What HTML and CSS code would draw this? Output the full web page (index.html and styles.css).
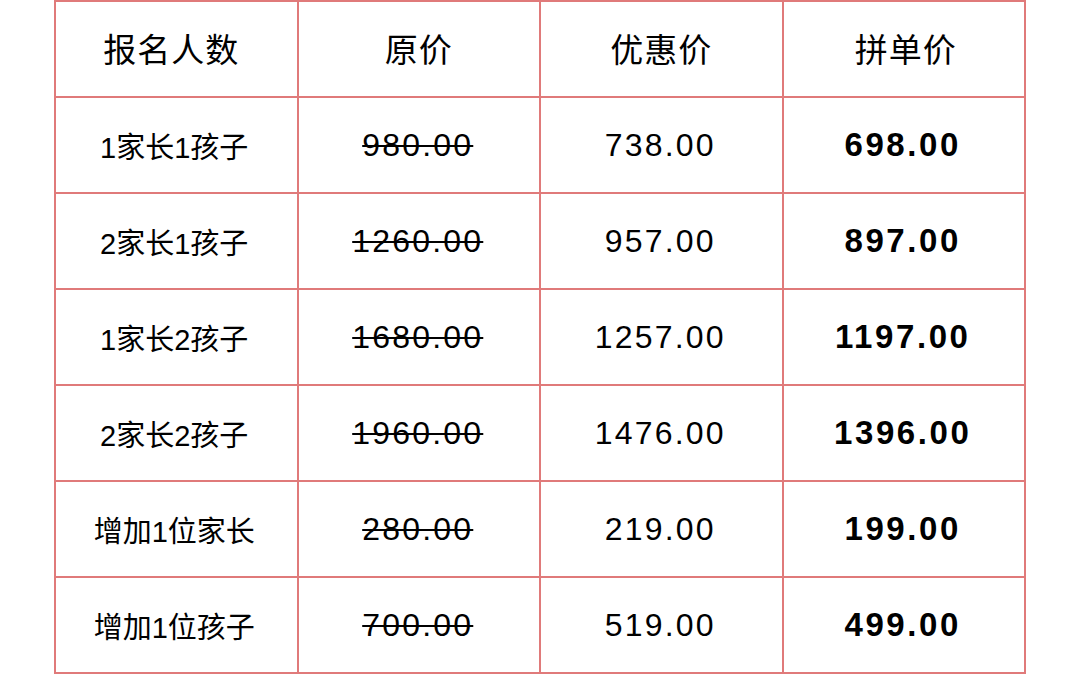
FILE: index.html
```html
<!DOCTYPE html>
<html lang="zh-CN">
<head>
<meta charset="utf-8">
<link rel="stylesheet" href="styles.css">
</head>
<body>
<div class="page">
  <div class="price-table">
    <div class="cell head first">报名人数</div>
    <div class="cell head">原价</div>
    <div class="cell head">优惠价</div>
    <div class="cell head shift">拼单价</div>

    <div class="cell label">1家长1孩子</div>
    <div class="cell num old">980.00</div>
    <div class="cell num">738.00</div>
    <div class="cell num bold">698.00</div>

    <div class="cell label">2家长1孩子</div>
    <div class="cell num old">1260.00</div>
    <div class="cell num">957.00</div>
    <div class="cell num bold">897.00</div>

    <div class="cell label">1家长2孩子</div>
    <div class="cell num old">1680.00</div>
    <div class="cell num">1257.00</div>
    <div class="cell num bold">1197.00</div>

    <div class="cell label">2家长2孩子</div>
    <div class="cell num old">1960.00</div>
    <div class="cell num">1476.00</div>
    <div class="cell num bold">1396.00</div>

    <div class="cell label">增加1位家长</div>
    <div class="cell num old">280.00</div>
    <div class="cell num">219.00</div>
    <div class="cell num bold">199.00</div>

    <div class="cell label">增加1位孩子</div>
    <div class="cell num old">700.00</div>
    <div class="cell num">519.00</div>
    <div class="cell num bold">499.00</div>
  </div>
</div>
</body>
</html>
```

FILE: styles.css
```css
html, body {
  margin: 0;
  padding: 0;
  background: #ffffff;
}

.page {
  width: 1080px;
  height: 674px;
  overflow: hidden;
  padding-left: 54px;
  box-sizing: border-box;
}

.price-table {
  width: 972px;
  display: grid;
  grid-template-columns: repeat(4, 1fr);
  border-left: 2px solid #e07a7a;
  border-top: 2px solid #e07a7a;
  box-sizing: border-box;
  color: #000;
}

.cell {
  height: 96px;
  box-sizing: border-box;
  border-right: 2px solid #e07a7a;
  border-bottom: 2px solid #e07a7a;
  display: flex;
  align-items: center;
  justify-content: center;
  font-family: "Liberation Sans", "Noto Sans CJK SC", sans-serif;
}

.head {
  font-family: "Noto Sans CJK SC", sans-serif;
  font-size: 33px;
  letter-spacing: 1px;
  padding-bottom: 2px;
}

.head.first {
  padding-right: 10px;
}

.head.shift {
  padding-left: 4px;
}

.label {
  font-family: "Liberation Sans", "Noto Sans CJK SC", sans-serif;
  font-size: 29px;
  padding-right: 4px;
}

.num {
  font-size: 32px;
  letter-spacing: 2.2px;
  padding-right: 2px;
}

.old {
  text-decoration: line-through;
  text-decoration-thickness: 2px;
}

.bold {
  font-weight: bold;
  font-size: 33px;
  letter-spacing: 2.6px;
}
```
